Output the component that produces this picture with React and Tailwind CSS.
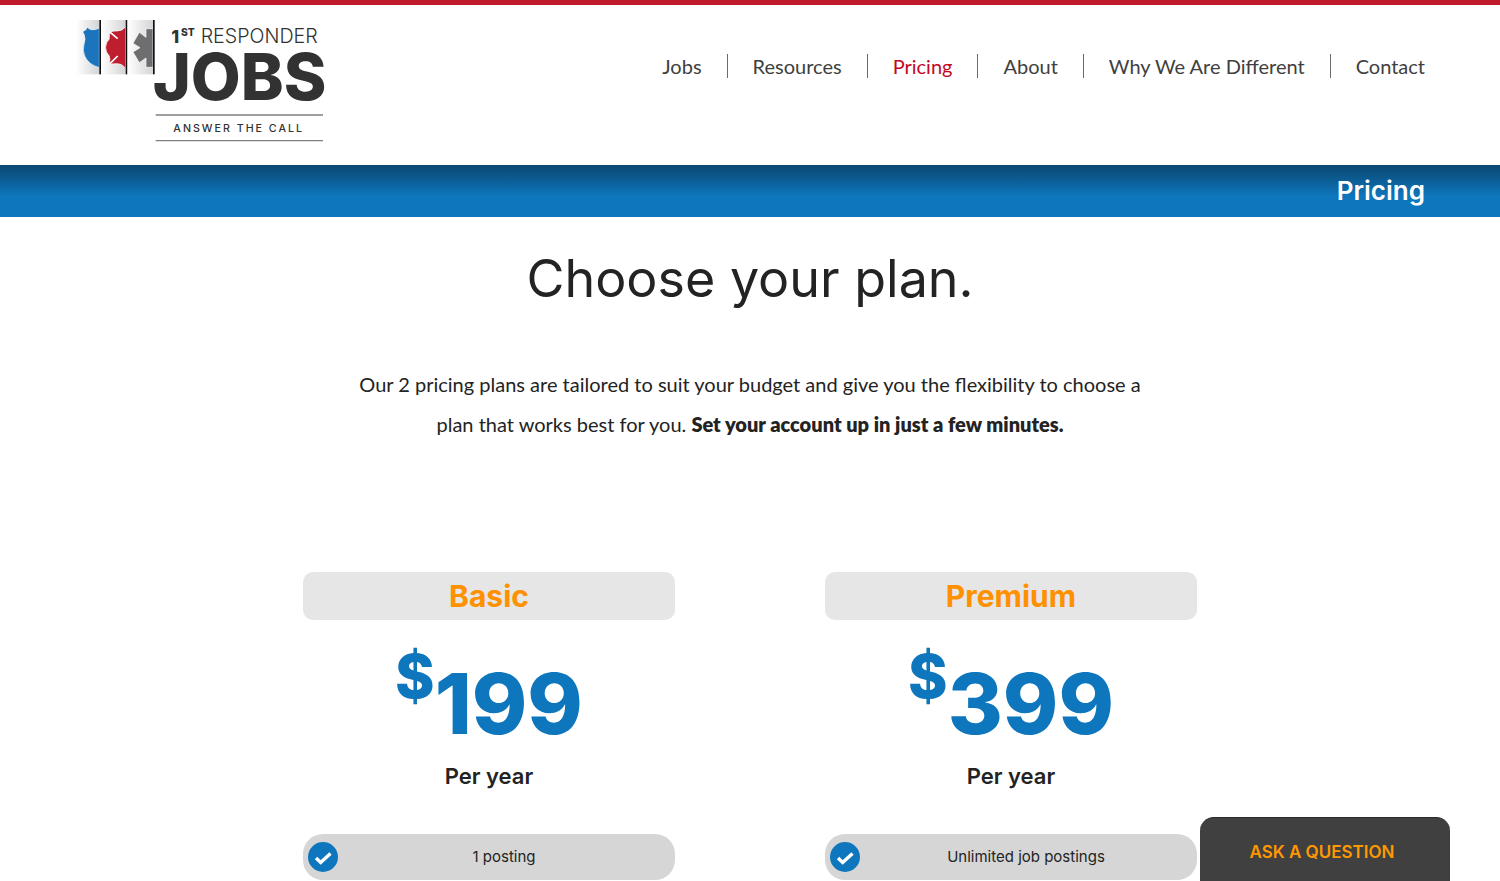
import React from "react";

const navItems = [
  "Jobs",
  "Resources",
  "Pricing",
  "About",
  "Why We Are Different",
  "Contact",
];

const plans = [
  { name: "Basic", price: "199", period: "Per year", features: ["1 posting"] },
  {
    name: "Premium",
    price: "399",
    period: "Per year",
    features: ["Unlimited job postings"],
  },
];

const Logo = () => {
  return (
    <svg
      viewBox="45 60 756 372"
      className="block h-[124px] w-[252px]"
      role="img"
      aria-label="1st Responder Jobs"
    >
      <defs>
        <linearGradient id="panel" x1="0" x2="1" y1="0" y2="0">
          <stop offset="0" stopColor="#ffffff" />
          <stop offset="1" stopColor="#d3d4d6" />
        </linearGradient>
      </defs>

      {/* Police shield */}
      <rect x="48" y="60" width="70" height="163" fill="url(#panel)" />
      <path
        d="M118 84Q106 91 94 89Q87 87 82 82Q79 91 69 94Q68 98 72 103Q78 116 72 132Q66 152 75 170Q86 194 118 203Z"
        fill="#1c75bc"
        stroke="#ffffff"
        strokeWidth="2"
      />
      <rect x="118" y="60" width="5" height="163" fill="#111111" />

      {/* Fire cross */}
      <rect x="124" y="60" width="73" height="163" fill="url(#panel)" />
      <path
        d="M197 80Q186 94 171 93Q161 92 152 96Q147 101 148 108Q150 119 141 126Q133 142 140 157Q150 167 150 179Q147 186 151 192Q160 191 172 191Q186 190 197 205Z"
        fill="#be1e2d"
        stroke="#ffffff"
        strokeWidth="2"
      />
      <path
        d="M147 94L173 116M150 191L173 168"
        stroke="#ffffff"
        strokeWidth="5"
      />
      <rect x="197" y="60" width="5" height="163" fill="#111111" />

      {/* Star of life */}
      <rect x="203" y="60" width="76" height="163" fill="url(#panel)" />
      <path
        d="M279 86H258V112L238 97L219 130L240 143L219 156L238 188L258 174V202H279Z"
        fill="#6d6e70"
        stroke="#ffffff"
        strokeWidth="2"
      />
      <rect x="279" y="60" width="5" height="163" fill="#111111" />

      <g fill="#323232" fontFamily="Inter, sans-serif">
        <text x="334" y="129" fontSize="54" fontWeight="800">
          1
        </text>
        <text x="363" y="109" fontSize="31" fontWeight="800">
          ST
        </text>
        <text x="422" y="130" fontSize="59" fontWeight="300">
          RESPONDER
        </text>
        <text x="278" y="301" fontSize="194" fontWeight="800">
          JOBS
        </text>
        <text
          x="340"
          y="395"
          fontSize="32"
          fontWeight="500"
          letterSpacing="6"
        >
          ANSWER THE CALL
        </text>
      </g>
      <path d="M287 345H789M287 422H789" stroke="#808080" strokeWidth="4" />
    </svg>
  );
};

const CheckBadge = () => {
  return (
    <svg viewBox="0 0 30 30" className="size-[30px] shrink-0" aria-hidden="true">
      <circle cx="15" cy="15" r="15" fill="#0d76bd" />
      <path
        d="M8 16L12.7 20.5L22.5 11.5"
        fill="none"
        stroke="#ffffff"
        strokeWidth="3.4"
      />
    </svg>
  );
};

const Plan = ({ plan }) => {
  return (
    <section className="text-center">
      <h2 className="rounded-[10px] bg-[#e6e6e6] font-['Inter',sans-serif] text-[30px] leading-12 font-bold text-[#ff9100]">
        {plan.name}
      </h2>
      <p className="mt-6 flex h-29 items-start justify-center font-['Inter',sans-serif] font-extrabold text-[#0d76bd]">
        <span className="text-[60px] leading-16">$</span>
        <span className="text-[84px] leading-30">{plan.price}</span>
      </p>
      <p className="font-['Inter',sans-serif] text-[22px] leading-8 font-semibold">
        {plan.period}
      </p>
      <ul className="mt-[42px] space-y-4">
        {plan.features.map((feature) => (
          <li
            key={feature}
            className="flex h-[46px] items-center rounded-[20px] bg-[#d6d6d6] px-[5px]"
          >
            <CheckBadge />
            <span className="flex-1 font-['Inter',sans-serif] text-[15px]">
              {feature}
            </span>
          </li>
        ))}
      </ul>
    </section>
  );
};

const App = () => {
  return (
    <div className="border-t-[5px] border-[#be1a2b] bg-white font-['Lato',sans-serif] text-[#232323]">
      <header className="flex h-40 items-start justify-between px-[5%] pt-[15px]">
        <a href="#home">
          <Logo />
        </a>
        <nav className="mt-[34px] flex divide-x divide-[#6b6b6b]">
          {navItems.map((item) => (
            <a
              key={item}
              href="#nav"
              className={
                item === "Pricing"
                  ? "px-[25px] text-xl leading-6 text-[#c1081f]"
                  : "px-[25px] text-xl leading-6 text-[#404040] first:pl-0 last:pr-0"
              }
            >
              {item}
            </a>
          ))}
        </nav>
      </header>

      <div className="bg-[#0d76bd] bg-linear-to-b from-[#0a4770] to-[#0d76bd] to-60% px-[5%] text-right">
        <p className="font-['Inter',sans-serif] text-[26px] leading-[52px] font-semibold text-white">
          Pricing
        </p>
      </div>

      <main className="px-[5%] pt-[30px]">
        <h1 className="text-center font-['Inter',sans-serif] text-[52px] leading-16">
          Choose your plan.
        </h1>
        <p className="mx-auto mt-[53px] max-w-[810px] text-center text-xl leading-10">
          Our 2 pricing plans are tailored to suit your budget and give you the
          flexibility to choose a plan that works best for you.{" "}
          <strong className="font-extrabold">
            Set your account up in just a few minutes.
          </strong>
        </p>
        <div className="mx-auto mt-32 grid max-w-[894px] grid-cols-2 gap-[150px]">
          {plans.map((plan) => (
            <Plan key={plan.name} plan={plan} />
          ))}
        </div>
      </main>

      <button className="fixed right-[50px] bottom-0 h-16 w-[250px] rounded-t-[14px] border-t border-[#2b2b2b] bg-[#404040] pt-[6px] pr-[6px] font-['Inter',sans-serif] text-[17px] font-semibold text-[#ff9800]">
        ASK A QUESTION
      </button>
    </div>
  );
};

export default App;
